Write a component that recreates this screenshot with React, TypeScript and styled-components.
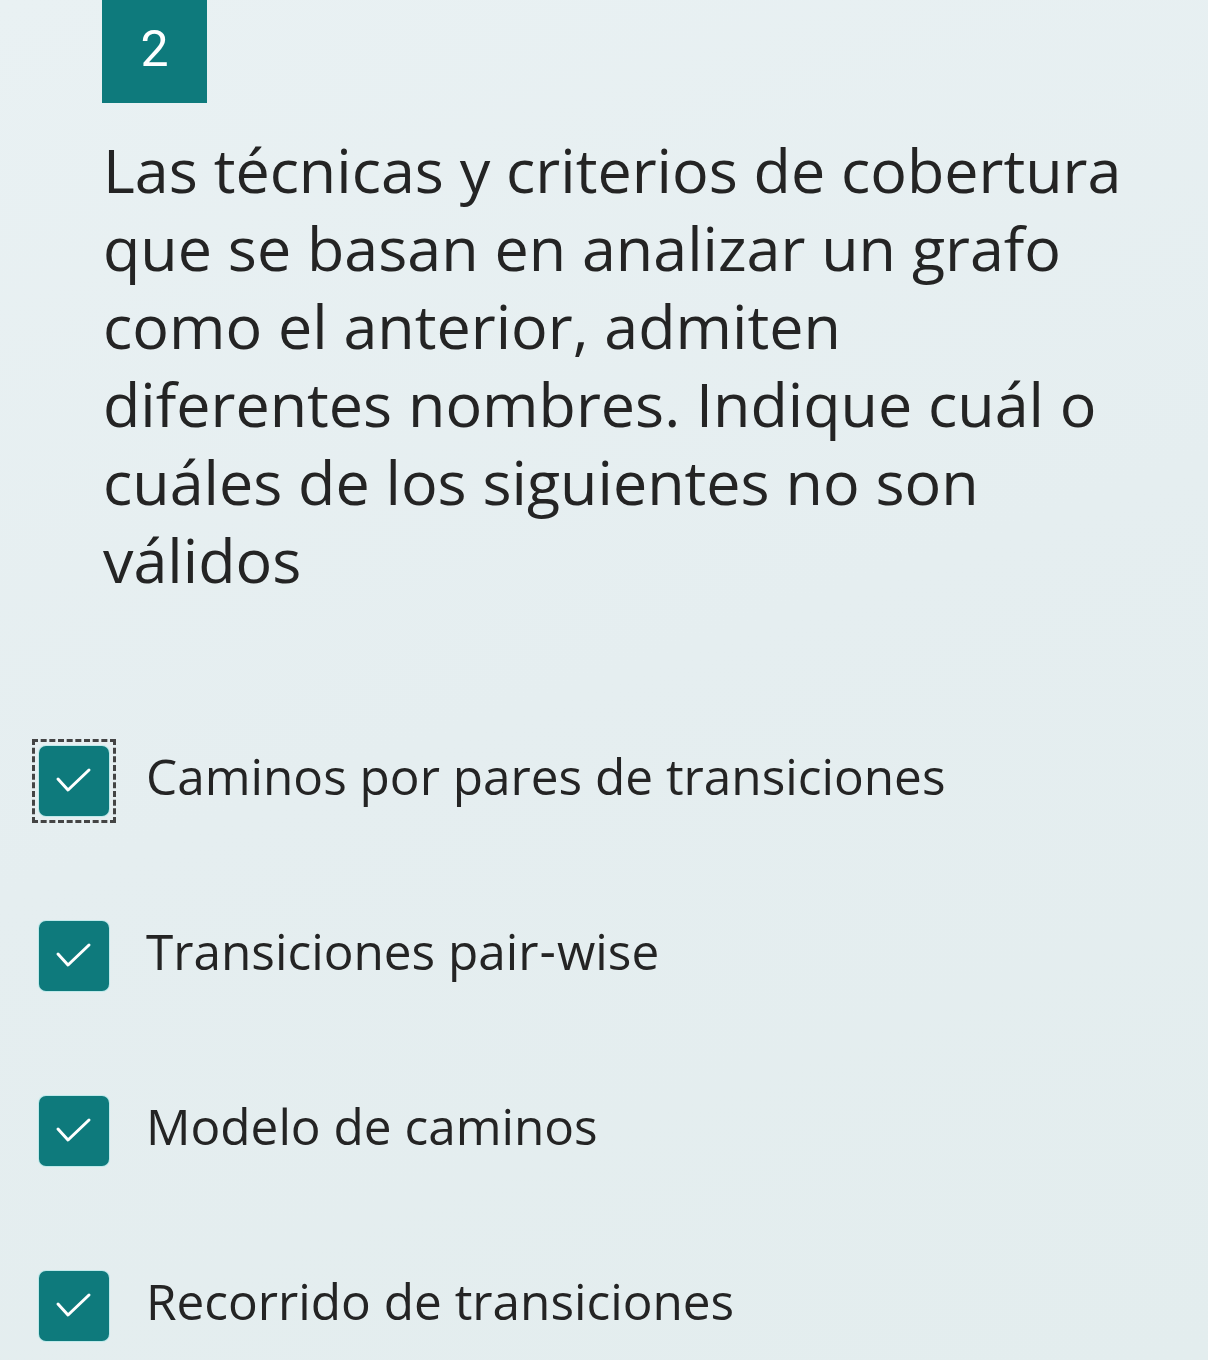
import React from "react";
import styled, { createGlobalStyle } from "styled-components";

const Global = createGlobalStyle`
  html, body { margin: 0; padding: 0; }
  body {
    width: 1208px;
    height: 1360px;
    overflow: hidden;
    background: linear-gradient(160deg, #e9f1f3 0%, #e5eef0 50%, #e3edee 100%);
    font-family: "Open Sans", Lato, sans-serif;
    color: #242424;
  }
`;

const Page = styled.div`
  width: 1208px;
  height: 1360px;
  display: flex;
  flex-direction: column;
  box-sizing: border-box;
`;

const Header = styled.div`
  padding-left: 102px;
`;

const Badge = styled.div`
  width: 105px;
  height: 103px;
  background: #0e7a7c;
  color: #ffffff;
  font-family: Roboto, "Open Sans", sans-serif;
  font-size: 50px;
  display: flex;
  align-items: center;
  justify-content: center;
  padding-bottom: 6px;
  box-sizing: border-box;
`;

const Question = styled.div`
  margin: 28px 0 0 103px;
  width: 1030px;
  font-size: 61px;
  line-height: 78px;
  color: #242424;
`;

const Options = styled.div`
  margin-top: 147px;
  display: flex;
  flex-direction: column;
  gap: 105px;
  padding-left: 39px;
`;

const Row = styled.div`
  display: flex;
  align-items: center;
  gap: 37px;
  height: 70px;
`;

const BoxWrap = styled.div<{ $focus?: boolean }>`
  width: 70px;
  height: 70px;
  position: relative;
  flex: none;
  outline: ${(p) => (p.$focus ? "3px dashed #444" : "none")};
  outline-offset: 4px;
`;

const Box = styled.div`
  width: 70px;
  height: 70px;
  border-radius: 7px;
  background: #0e7a7c;
  display: flex;
  align-items: center;
  justify-content: center;
  box-shadow: 0 0 0 1px #bfe9ea;
`;

const Label = styled.div`
  font-size: 49.5px;
  padding-bottom: 10px;
  color: #242424;
`;

const Check = () => (
  <svg width="40" height="40" viewBox="0 0 40 40" fill="none">
    <path d="M4 18 L14 29 L35 9" stroke="#ffffff" strokeWidth="3" strokeLinecap="round" strokeLinejoin="round" />
  </svg>
);

const items = [
  "Caminos por pares de transiciones",
  "Transiciones pair‑wise",
  "Modelo de caminos",
  "Recorrido de transiciones",
];

export default function App() {
  return (
    <Page>
      <Global />
      <Header>
        <Badge>2</Badge>
      </Header>
      <Question>
        Las técnicas y criterios de cobertura que se basan en analizar un grafo como el anterior, admiten
        diferentes nombres. Indique cuál o cuáles de los siguientes no son válidos
      </Question>
      <Options>
        {items.map((t, i) => (
          <Row key={t}>
            <BoxWrap $focus={i === 0}>
              <Box>
                <Check />
              </Box>
            </BoxWrap>
            <Label>{t}</Label>
          </Row>
        ))}
      </Options>
    </Page>
  );
}
